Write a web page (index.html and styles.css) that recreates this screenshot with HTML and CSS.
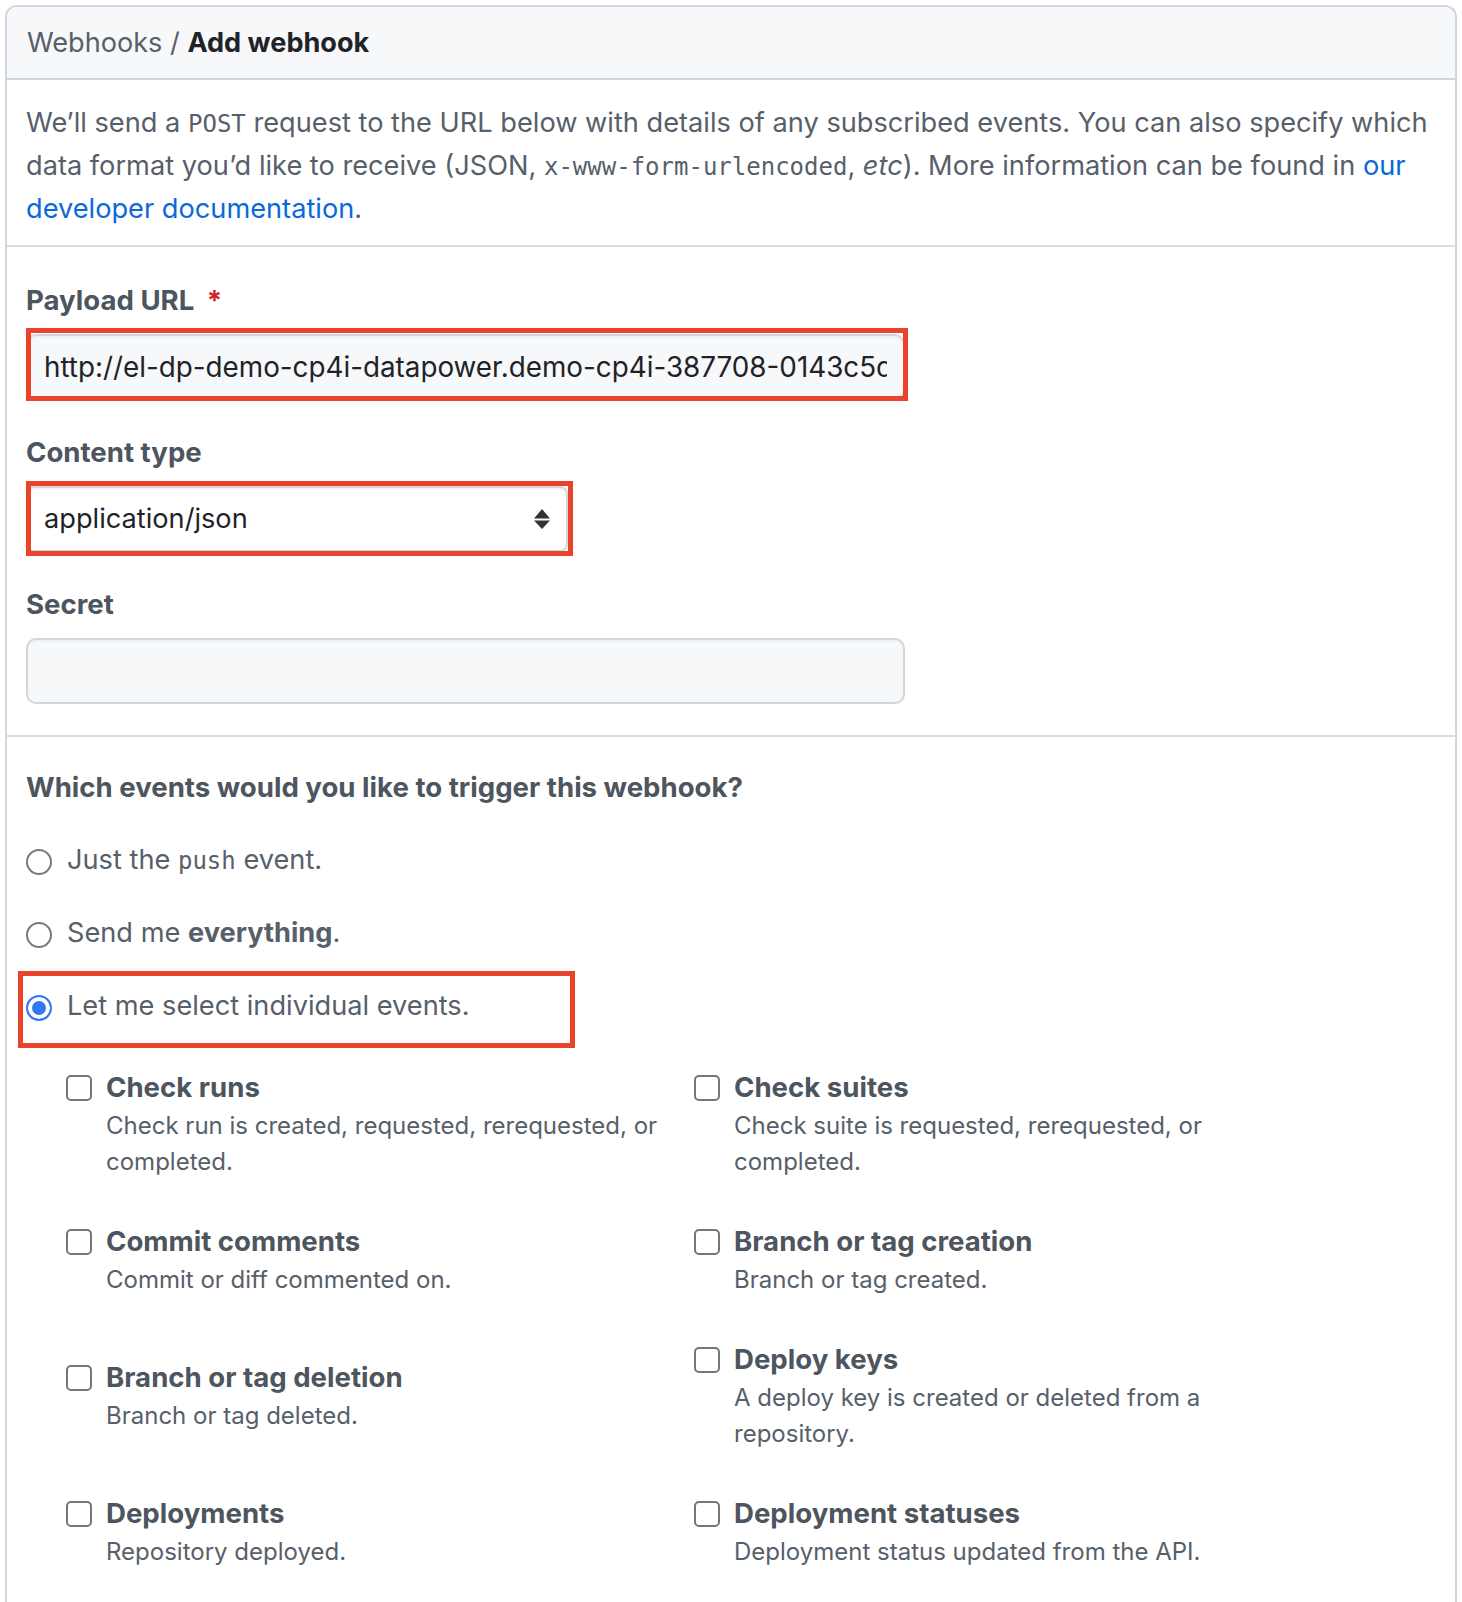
FILE: index.html
```html
<!DOCTYPE html>
<html lang="en">
<head>
<meta charset="utf-8">
<title>Add webhook</title>
<link rel="stylesheet" href="styles.css">
</head>
<body>
<div class="box">
  <div class="box-header"><span class="crumb">Webhooks</span><span class="crumb"> / </span><strong class="current">Add webhook</strong></div>

  <div class="box-section intro">
    <p>We’ll send a <code>POST</code> request to the URL below with details of any subscribed events. You can also specify which data format you’d like to receive (JSON, <code>x-www-form-urlencoded</code>, <em>etc</em>). More information can be found in <a href="#">our developer documentation</a>.</p>
  </div>

  <div class="box-section form">
    <div class="form-group">
      <div class="label">Payload URL <span class="req">*</span></div>
      <div class="annotated annot-url">
        <input class="input wide url" type="text" value="http://el-dp-demo-cp4i-datapower.demo-cp4i-387708-0143c5d0a3ab4a5f8c2d1e9b7f6a3c21-0000.us-south.containers.appdomain.cloud">
      </div>
    </div>
    <div class="form-group">
      <div class="label">Content type</div>
      <div class="annotated annot-select">
        <div class="select">
          <span>application/json</span>
          <svg class="select-arrows" width="16" height="20" viewBox="0 0 16 20"><path d="M0 9.5 L16 9.5 L8 0 Z M0 11.5 L16 11.5 L8 20 Z" fill="#333"/></svg>
        </div>
      </div>
    </div>
    <div class="form-group">
      <div class="label">Secret</div>
      <input class="input wide" type="text" value="">
    </div>
  </div>

  <div class="box-section events-section">
    <div class="question">Which events would you like to trigger this webhook?</div>
    <div class="radio-row"><span class="radio"></span><span>Just the <code>push</code> event.</span></div>
    <div class="radio-row"><span class="radio"></span><span>Send me <strong>everything</strong>.</span></div>
    <div class="radio-row annotated annot-radio"><span class="radio checked"></span><span>Let me select individual events.</span></div>

    <div class="events">
      <div class="event"><span class="checkbox"></span><div class="event-text"><div class="event-title">Check runs</div><div class="event-desc">Check run is created, requested, rerequested, or completed.</div></div></div>
      <div class="event"><span class="checkbox"></span><div class="event-text"><div class="event-title">Check suites</div><div class="event-desc">Check suite is requested, rerequested, or completed.</div></div></div>
      <div class="event"><span class="checkbox"></span><div class="event-text"><div class="event-title">Commit comments</div><div class="event-desc">Commit or diff commented on.</div></div></div>
      <div class="event"><span class="checkbox"></span><div class="event-text"><div class="event-title">Branch or tag creation</div><div class="event-desc">Branch or tag created.</div></div></div>
      <div class="event shifted"><span class="checkbox"></span><div class="event-text"><div class="event-title">Branch or tag deletion</div><div class="event-desc">Branch or tag deleted.</div></div></div>
      <div class="event"><span class="checkbox"></span><div class="event-text"><div class="event-title">Deploy keys</div><div class="event-desc">A deploy key is created or deleted from a repository.</div></div></div>
      <div class="event"><span class="checkbox"></span><div class="event-text"><div class="event-title">Deployments</div><div class="event-desc">Repository deployed.</div></div></div>
      <div class="event"><span class="checkbox"></span><div class="event-text"><div class="event-title">Deployment statuses</div><div class="event-desc">Deployment status updated from the API.</div></div></div>
    </div>
  </div>
</div>
</body>
</html>
```

FILE: styles.css
```css
*, *::before, *::after { box-sizing: border-box; }
html, body { margin: 0; padding: 0; background: #ffffff; }
body {
  font-family: "Inter", "Liberation Sans", Arial, sans-serif;
  font-size: 27.2px;
  line-height: 42px;
  color: #57606a;
}
.box {
  margin: 5px 5px 0 5px;
  border: 2px solid #d0d7de;
  border-bottom: none;
  border-radius: 12px 12px 0 0;
  overflow: hidden;
}
.box-header {
  height: 73px;
  padding: 15px 20px 0 20px;
  background: #f6f8fa;
  border-bottom: 2px solid #d0d7de;
  font-size: 27.1px;
  line-height: 42px;
}
.crumb { color: #57606a; }
.current { color: #1f2328; font-weight: 700; }
.box-section { border-bottom: 2px solid #d8dee4; }
.intro { padding: 22px 20px 16px 19px; line-height: 41px; }
.intro p { margin: 0; }
code {
  font-family: "DejaVu Sans Mono", "Liberation Mono", monospace;
  font-size: 24px;
}
em { font-style: italic; }
a { color: #0969da; text-decoration: none; }

.form { padding: 32px 20px 31px 19px; }
.form-group { margin-bottom: 31px; }
.form-group:last-child { margin-bottom: 0; }
.label { font-weight: 700; font-size: 27.6px; line-height: 42px; margin-bottom: 13px; color: #4d555e; }
.req { color: #cf222e; margin-left: 6px; }
.input {
  display: block;
  height: 66px;
  padding: 0 16px;
  font: inherit;
  color: #1f2328;
  background: #f6f8fa;
  border: 2px solid #d0d7de;
  border-radius: 10px;
  box-shadow: inset 0 2px 0 rgba(208, 215, 222, 0.2);
  outline: none;
}
.input.url { font-size: 27.8px; }
.wide { width: 879px; }
.select {
  display: flex;
  align-items: center;
  justify-content: space-between;
  width: 542px;
  height: 66px;
  padding: 0 16px 0 16px;
  color: #1f2328;
  background: #ffffff;
  border: 2px solid #d0d7de;
  border-radius: 8px;
  box-shadow: inset 0 2px 0 rgba(208, 215, 222, 0.25);
}
.select-arrows { display: block; }

.annotated { position: relative; }
.annotated::after {
  content: "";
  position: absolute;
  border: 5px solid #e9432b;
  pointer-events: none;
}
.annot-url::after { top: -6px; bottom: -1px; left: 0; width: 882px; }
.annot-select::after { top: -5px; bottom: -4px; left: 0; width: 547px; }
.annot-radio::after { top: -14px; bottom: -21px; left: -8px; width: 557px; }

.events-section { padding: 29px 20px 120px 19px; border-bottom: none; }
.question { font-weight: 700; font-size: 27.6px; line-height: 42px; color: #4d555e; }
.radio-row {
  display: flex;
  align-items: flex-start;
  gap: 15px;
  margin-top: 30.5px;
  line-height: 42px;
}
.radio-row:first-of-type { margin-top: 31px; }
.radio {
  flex: none;
  width: 26px;
  height: 26px;
  margin-top: 10px;
  border: 2px solid #7a7a7a;
  border-radius: 50%;
  background: #ffffff;
}
.radio.checked {
  border-color: #3478f6;
  background: #3478f6;
  box-shadow: inset 0 0 0 4px #ffffff;
}
.radio-row strong { font-weight: 700; }

.events {
  display: grid;
  grid-template-columns: 628px 628px;
  row-gap: 43px;
  margin-top: 42px;
  padding-left: 40px;
  align-items: start;
}
.event { display: flex; align-items: flex-start; gap: 14px; }
.event.shifted { padding-top: 18px; }
.checkbox {
  flex: none;
  width: 26px;
  height: 26px;
  margin-top: 6px;
  border: 2px solid #767676;
  border-radius: 5px;
  background: #ffffff;
}
.event-text { max-width: 565px; }
.event-title { font-weight: 700; font-size: 27.6px; line-height: 36px; color: #4d555e; }
.event-desc { font-size: 24px; line-height: 36px; margin-top: 3px; }
```
